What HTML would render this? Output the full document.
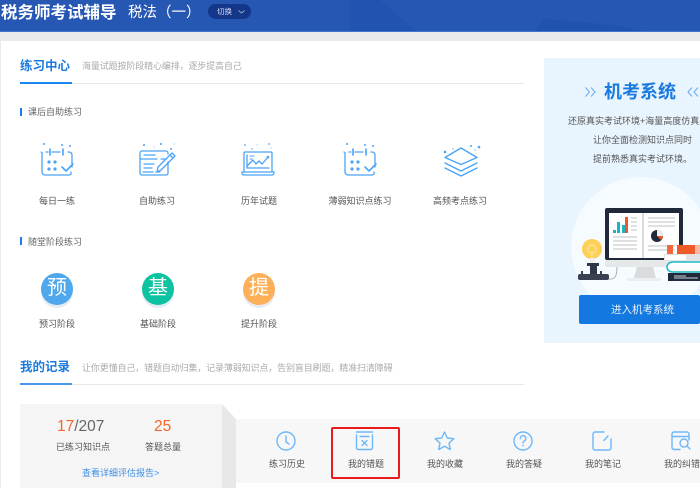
<!DOCTYPE html>
<html lang="zh"><head><meta charset="utf-8">
<style>
html,body{margin:0;padding:0}
body{width:700px;height:488px;overflow:hidden;position:relative;background:#fff;font-family:"Liberation Sans","Noto Sans CJK SC",sans-serif;color:#555}
.a{position:absolute;white-space:nowrap}
.c{position:absolute;white-space:nowrap;text-align:center;font-size:9px;line-height:12px;color:#555;width:90px}
svg{position:absolute;overflow:visible}
.b{fill:none;stroke:#4aa3f5;stroke-width:1.3;stroke-linecap:round;stroke-linejoin:round}
.d{fill:#4aa3f5}
.r{fill:none;stroke:#6db8fa;stroke-width:1.4;stroke-linecap:round;stroke-linejoin:round}
.circ{position:absolute;width:32px;height:32px;border-radius:50%;color:#fff;font-size:20px;line-height:31px;text-align:center;box-shadow:0 3px 0 #e6ebf3}
</style></head><body>
<div class="a" style="left:0;top:0;width:700px;height:32px;background:#2557b3;border-bottom:1px solid #3d74cc;box-sizing:border-box"></div>
<svg style="left:0;top:0" width="700" height="31"><path d="M350 0h30l36 31h-66z" fill="#2253b0"/><path d="M536 31l8-12 70 6 30 6z" fill="#2052ae"/></svg>
<div class="a" style="left:0;top:32px;width:700px;height:9px;background:#e8ebed"></div>
<div class="a" style="left:0;top:41px;width:1px;height:447px;background:#e8ebed"></div>
<div class="a" style="left:1px;top:2px;font-size:16.5px;line-height:22px;font-weight:bold;color:#fff">税务师考试辅导</div>
<div class="a" style="left:128px;top:2px;font-size:14.5px;line-height:22px;color:#fff">税法（一）</div>
<div class="a" style="left:208px;top:4px;width:43px;height:15px;border-radius:8px;background:#15378a"></div>
<div class="a" style="left:217px;top:6px;font-size:7.5px;line-height:11px;color:#d5dff2">切换</div>
<svg style="left:238px;top:10px" width="7" height="4"><path d="M.5.5L3.5 3 6.500.5" fill="none" stroke="#b9c9e8" stroke-width=".8"/></svg>

<div class="a" style="left:20px;top:57px;font-size:12.500px;line-height:18px;font-weight:bold;color:#1a7ae0">练习中心</div>
<div class="a" style="left:82px;top:60px;font-size:9px;line-height:13px;color:#aaa;letter-spacing:-.13px">海量试题按阶段精心编排，逐步提高自己</div>
<div class="a" style="left:20px;top:83px;width:504px;height:1px;background:#e8e8e8"></div>
<div class="a" style="left:20px;top:82px;width:52px;height:2px;background:#1a88ee"></div>

<div class="a" style="left:20px;top:108px;width:2px;height:8px;background:#1a7ae0"></div>
<div class="a" style="left:28px;top:106px;font-size:9px;line-height:12px;color:#666">课后自助练习</div>

<!-- 每日一练 -->
<svg style="left:40px;top:143px" width="34" height="36"><g class="b"><path d="M2 9.500V29a3 3 0 0 0 3 3h24a3 3 0 0 0 2-1V29M32 24V12a3 3 0 0 0-3-3h-1M6 9h2M12 9h8"/><path d="M10 6v6M23 6v6" stroke-width="1.600"/><path d="M22 24l4 4 7-7" stroke-width="1.600"/></g><g class="d"><circle cx="9" cy="19" r="1.600"/><circle cx="15" cy="19" r="1.600"/><circle cx="9" cy="26" r="1.600"/><circle cx="15" cy="26" r="1.600"/><circle cx="4" cy="1" r="1"/><circle cx="22" cy="2" r="1"/><circle cx="30" cy="3" r="1"/><circle cx="1" cy="9" r=".6"/></g></svg>
<div class="c" style="left:12px;top:195px">每日一练</div>

<!-- 自助练习 -->
<svg style="left:140px;top:143px" width="36" height="36"><g class="b"><path d="M28 19v11a2 2 0 0 1-2 2H2a2 2 0 0 1-2-2V10a2 2 0 0 1 2-2h24a2 2 0 0 1 2 2v1M0 16h17M21 16h5"/><path d="M4 12h3M8 12h7M4 21h10M4 25h8M3 29h10M16 29h4"/><path d="M17 29l1-5 14-14 2 2 1 1-14 14z"/><path d="M30 12l3 3"/></g><g class="d"><circle cx="4" cy="2" r="1"/><circle cx="21" cy="1" r="1"/><circle cx="31" cy="6" r="1"/><circle cx="34" cy="1" r=".5"/><circle cx="14" cy="4" r=".5"/></g></svg>
<div class="c" style="left:112px;top:195px">自助练习</div>

<!-- 历年试题 -->
<svg style="left:241px;top:143px" width="36" height="36"><g class="b"><path d="M3 28V10a1 1 0 0 1 1-1h26a1 1 0 0 1 1 1v18M1 29h32v1a2 2 0 0 1-2 2H3a2 2 0 0 1-2-2z"/><path d="M6 12v13h22M9 25h16"/><path d="M6 23l6-6 3 4 3-3 3 3 6-7"/><path d="M9 13h4M9 16h2" stroke-width="1"/></g><g class="d"><circle cx="27" cy="14" r="1.300"/><circle cx="4" cy="2" r=".9"/><circle cx="28" cy="1" r=".9"/><circle cx="16" cy="2" r=".5"/><circle cx="11" cy="6" r=".7"/><circle cx="30" cy="5" r=".5"/></g></svg>
<div class="c" style="left:214px;top:195px">历年试题</div>

<!-- 薄弱知识点练习 -->
<svg style="left:344px;top:143px" width="34" height="36"><g class="b"><path d="M1 9.500V29a3 3 0 0 0 3 3h24a3 3 0 0 0 2-1V29M31 24V12a3 3 0 0 0-3-3h-1M5 9h2M11 9h8"/><path d="M9 6v6M22 6v6" stroke-width="1.600"/><path d="M21 24l4 4 7-7" stroke-width="1.600"/></g><g class="d"><circle cx="8" cy="19" r="1.600"/><circle cx="14" cy="19" r="1.600"/><circle cx="8" cy="26" r="1.600"/><circle cx="14" cy="26" r="1.600"/><circle cx="3" cy="1" r="1"/><circle cx="21" cy="2" r="1"/><circle cx="29" cy="3" r="1"/><circle cx="0" cy="9" r=".6"/></g></svg>
<div class="c" style="left:315px;top:195px">薄弱知识点练习</div>

<!-- 高频考点练习 -->
<svg style="left:444px;top:143px" width="36" height="36"><g class="b"><path d="M17 5L33 14.500 17 21.500 1 14.500z" stroke-width="1.400"/><path d="M1 20l16 8 16-8M1 25l16 8 16-8" stroke-width="1.400"/></g><g class="d"><circle cx="1" cy="9" r="1.300"/><circle cx="27" cy="3" r="1"/><circle cx="35" cy="4" r="1.300"/><circle cx="9" cy="6" r=".7"/><circle cx="31" cy="7" r=".6"/></g></svg>
<div class="c" style="left:415px;top:195px">高频考点练习</div>

<div class="a" style="left:20px;top:237px;width:2px;height:8px;background:#1a7ae0"></div>
<div class="a" style="left:28px;top:236px;font-size:9px;line-height:12px;color:#666">随堂阶段练习</div>

<div class="circ" style="left:41px;top:273px;background:#4fa7ec">预</div>
<div class="circ" style="left:142px;top:273px;background:#0bc3a0">基</div>
<div class="circ" style="left:243px;top:273px;background:#fdb058">提</div>
<div class="c" style="left:12px;top:318px">预习阶段</div>
<div class="c" style="left:113px;top:318px">基础阶段</div>
<div class="c" style="left:214px;top:318px">提升阶段</div>

<!-- 机考系统 -->
<div class="a" style="left:544px;top:58px;width:156px;height:285px;background:#e8f4fe"></div>
<svg style="left:544px;top:58px" width="156" height="285"><defs><clipPath id="k"><rect width="156" height="285"/></clipPath></defs><circle clip-path="url(#k)" cx="97" cy="189" r="70" fill="#f6fbff"/></svg>
<svg style="left:585px;top:85px" width="115" height="14"><path d="M.5 2.500L4.500 7 .5 11.500M6 2.500L10 7 6 11.500" fill="none" stroke="#6aa9ee" stroke-width="1"/><path d="M107 2.500L103 7 107 11.500M113 2.500L109 7 113 11.500" fill="none" stroke="#6aa9ee" stroke-width="1"/></svg>
<div class="a" style="left:604px;top:80px;font-size:18px;line-height:24px;font-weight:bold;color:#1a7ae0">机考系统</div>
<div class="a" style="left:568px;top:114px;font-size:9px;line-height:14px;color:#555">还原真实考试环境+海量高度仿真题</div>
<div class="a" style="left:593px;top:133px;font-size:9px;line-height:14px;color:#555">让你全面检测知识点同时</div>
<div class="a" style="left:593px;top:152px;font-size:9px;line-height:14px;color:#555">提前熟悉真实考试环境。</div>

<!-- illustration -->
<svg style="left:530px;top:180px" width="170" height="110">
<rect x="97" y="98" width="34" height="3" fill="#eceff2"/>
<path d="M107 87h16l3 11h-22z" fill="#d9dcdd"/>
<rect x="75" y="28" width="78" height="59" fill="#e6e8e9" rx="2"/>
<rect x="75" y="28" width="78" height="52" fill="#20293a" rx="2"/>
<rect x="79" y="33" width="70" height="45" fill="#fff"/>
<rect x="112" y="33" width="2" height="45" fill="#d9dcdd"/>
<path d="M83 53h3v-3h-3zM87 53h3V42h-3zM92 53h3v-8h-3z" fill="#19b5c4"/><rect x="95" y="37" width="3" height="16" fill="#f0562d"/>
<path d="M83 57h24M83 61h24M83 65h24M83 69h24M101 38h6M101 42h6M101 46h6M101 50h6M118 38h27M118 42h27M118 46h27M118 66h27M118 70h27" stroke="#d4d6d8" stroke-width="1.600"/>
<circle cx="127" cy="56" r="6" fill="#20293a"/><path d="M127 56v-6a6 6 0 0 1 6 6z" fill="#eee"/><path d="M127 56h6a6 6 0 0 1-2 4z" fill="#f0562d"/>
<circle cx="62" cy="69" r="10" fill="#fdd058"/>
<circle cx="62" cy="69" r="4" fill="none" stroke="#fde9a8"/><path d="M62 73v9" stroke="#fde9a8"/>
<rect x="60" y="78" width="5" height="5" fill="#eee"/>
<rect x="57" y="83" width="12" height="3" fill="#2f3748"/><rect x="60" y="86" width="7" height="9" fill="#2f3748"/>
<rect x="48" y="94" width="31" height="6" fill="#3a4150" rx="2"/><rect x="51" y="91" width="2" height="3" fill="#3a4150"/><rect x="70" y="91" width="2" height="3" fill="#3a4150"/>
<path d="M79 99c7 1 8-5 8-12" fill="none" stroke="#999" stroke-width=".8"/>
<rect x="163" y="65" width="7" height="9" fill="#fbb9a5"/><rect x="137" y="65" width="6" height="9" fill="#f26a3c"/><rect x="147" y="65" width="18" height="9" fill="#ee5a28"/>
<rect x="134" y="74" width="36" height="7" fill="#e3e3e3"/><rect x="135" y="75" width="21" height="5" fill="#fff"/>
<path d="M170 82h-27c-8 0-8 10 0 10h27" fill="#fff" stroke="#1bb7c6" stroke-width="1.500"/>
<rect x="138" y="93" width="32" height="8" fill="#20293a"/><path d="M144 96h12M144 98h24" stroke="#cfd3d8" stroke-width="1"/>
</svg>

<div class="a" style="left:579px;top:295px;width:121px;height:29px;background:#1378df;border-radius:2px"></div>
<div class="a" style="left:611px;top:303px;font-size:10.500px;line-height:14px;color:#e8f2fd">进入机考系统</div>

<!-- 我的记录 -->
<div class="a" style="left:20px;top:358px;font-size:12.500px;line-height:18px;font-weight:bold;color:#1a7ae0">我的记录</div>
<div class="a" style="left:82px;top:362px;font-size:9px;line-height:13px;color:#aaa;letter-spacing:-.13px">让你更懂自己，错题自动归集，记录薄弱知识点，告别盲目刷题，精准扫清障碍</div>
<div class="a" style="left:20px;top:384px;width:504px;height:1px;background:#e8e8e8"></div>
<div class="a" style="left:20px;top:383px;width:52px;height:2px;background:#4a96ea"></div>

<div class="a" style="left:236px;top:419px;width:464px;height:64px;background:#f7f7f7"></div>
<svg style="left:222px;top:404px" width="14" height="84"><path d="M0 0L14 15V84H0z" fill="#e8e8e8"/></svg>
<div class="a" style="left:20px;top:404px;width:202px;height:84px;background:#f5f5f5"></div>

<div class="a" style="left:57px;top:417px;font-size:15.500px;line-height:20px;color:#666"><span style="color:#f4672c">17</span>/207</div>
<div class="a" style="left:154px;top:417px;font-size:15.500px;line-height:20px;color:#f4672c">25</div>
<div class="a" style="left:56px;top:441px;font-size:9px;line-height:12px;color:#555">已练习知识点</div>
<div class="a" style="left:145px;top:441px;font-size:9px;line-height:12px;color:#555">答题总量</div>
<div class="a" style="left:82px;top:467px;font-size:9px;line-height:12px;color:#3d8fe6">查看详细评估报告&gt;</div>

<!-- record icons -->
<svg style="left:276px;top:431px" width="20" height="20"><circle class="r" cx="10" cy="10" r="9"/><path class="r" d="M10 5v6l3 2"/></svg>
<svg style="left:355px;top:431px" width="20" height="20"><path class="r" d="M1.500 4V17a1.500 1.500 0 0 0 1.500 1.500H16a1.500 1.500 0 0 0 1.500-1.500V4M1.500 1h16M5 5.500h9"/><path class="r" d="M7 9.500l5 5M12 9.500l-5 5"/></svg>
<svg style="left:434px;top:431px" width="21" height="20"><path class="r" d="M10.500 1l2.800 6 6.500.7-4.800 4.400 1.300 6.400-5.800-3.200-5.800 3.200 1.300-6.400L1.200 7.700l6.500-.7z"/></svg>
<svg style="left:513px;top:431px" width="20" height="20"><circle class="r" cx="10" cy="10" r="9"/><path class="r" d="M7.300 7.500a2.800 2.800 0 1 1 4.200 2.400c-1 .6-1.500 1-1.500 2"/><circle cx="10" cy="14.500" r=".9" fill="#6db8fa"/></svg>
<svg style="left:592px;top:431px" width="20" height="20"><path class="r" d="M12 1H3a2 2 0 0 0-2 2v14a2 2 0 0 0 2 2h14a2 2 0 0 0 2-2V8M16 5l-4 4.500"/></svg>
<svg style="left:671px;top:431px" width="21" height="20"><path class="r" d="M9 18.500H3a2 2 0 0 1-2-2V3a2 2 0 0 1 2-2h13a2 2 0 0 1 2 2v6M1 5.500h17"/><circle class="r" cx="13" cy="12" r="4"/><path class="r" d="M16 15l3 3"/></svg>

<div class="c" style="left:242px;top:458px">练习历史</div>
<div class="c" style="left:321px;top:458px">我的错题</div>
<div class="c" style="left:400px;top:458px">我的收藏</div>
<div class="c" style="left:479px;top:458px">我的答疑</div>
<div class="c" style="left:558px;top:458px">我的笔记</div>
<div class="c" style="left:637px;top:458px">我的纠错</div>

<div class="a" style="left:331px;top:427px;width:69px;height:52px;box-sizing:border-box;border:2px solid #e81c1c;border-radius:2px"></div>
</body></html>
